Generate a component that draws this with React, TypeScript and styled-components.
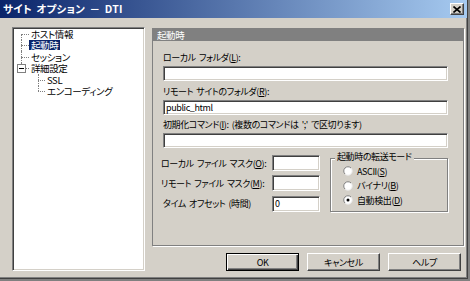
import styled, { createGlobalStyle } from "styled-components";

const GlobalStyle = createGlobalStyle`
  html, body {
    margin: 0;
    padding: 0;
    background: #808080;
  }
  body {
    font-family: "Noto Sans CJK JP", "DejaVu Sans", sans-serif;
    font-size: 9px;
    letter-spacing: -0.4px;
    word-spacing: 1.5px;
    font-feature-settings: "palt";
    color: #000;
  }
`;

const Window = styled.div`
  width: 468px;
  height: 279px;
  box-sizing: border-box;
  background: #d4d0c8;
  border-right: 1px solid #404040;
  border-bottom: 1px solid #404040;
  box-shadow: inset -1px -1px #808080;
  display: flex;
  flex-direction: column;
`;

const TitleBar = styled.div`
  height: 18px;
  display: flex;
  align-items: center;
  justify-content: space-between;
  padding: 0 3px 0 3px;
  background: linear-gradient(to right, #0a246a, #a6caf0);
`;

const Title = styled.span`
  color: #fff;
  font-weight: bold;
  font-size: 10.5px;
  line-height: 18px;
  letter-spacing: 0.2px;
  word-spacing: 2px;
`;

const CloseButton = styled.div`
  width: 14px;
  height: 12px;
  box-sizing: border-box;
  background: #d4d0c8;
  border: 1px solid;
  border-color: #fff #404040 #404040 #fff;
  box-shadow: inset -1px -1px #808080;
  display: flex;
  align-items: center;
  justify-content: center;
`;

const Body = styled.div`
  display: flex;
  gap: 7px;
  padding: 9px 0 0 12px;
`;

const Tree = styled.div`
  width: 133px;
  height: 244px;
  box-sizing: border-box;
  background: #fff;
  border: 1px solid;
  border-color: #808080 #fff #fff #808080;
  box-shadow: inset 1px 1px #404040, inset -1px -1px #d4d0c8;
  padding: 0 0 0 1px;
`;

const TreeRow = styled.div<{ $depth: number }>`
  height: 11.5px;
  display: flex;
  align-items: center;
  padding-left: ${(p) => (p.$depth === 0 ? 7 : 24)}px;
`;

const Connector = styled.span<{ $first?: boolean; $last?: boolean; $width: number }>`
  position: relative;
  flex: none;
  width: ${(p) => p.$width}px;
  align-self: stretch;
  &::before {
    content: "";
    position: absolute;
    left: 0;
    top: ${(p) => (p.$first ? "50%" : "0")};
    bottom: ${(p) => (p.$last ? "50%" : "0")};
    border-left: 1px dotted #808080;
  }
  &::after {
    content: "";
    position: absolute;
    left: 0;
    right: 0;
    top: 50%;
    border-top: 1px dotted #808080;
  }
`;

const ExpandBox = styled.span`
  position: absolute;
  z-index: 1;
  left: -4px;
  top: 50%;
  margin-top: -4px;
  width: 9px;
  height: 9px;
  box-sizing: border-box;
  background: #fff;
  border: 1px solid #808080;
  display: flex;
  align-items: center;
  justify-content: center;
  &::after {
    content: "";
    width: 5px;
    height: 1px;
    background: #000;
  }
`;

const TreeLabel = styled.span<{ $selected?: boolean }>`
  height: 10px;
  line-height: 10px;
  padding: 0 2px;
  white-space: nowrap;
  font-size: 9.5px;
  background: ${(p) => (p.$selected ? "#0a246a" : "transparent")};
  color: ${(p) => (p.$selected ? "#fff" : "#000")};
`;

const RightCol = styled.div`
  width: 312px;
  display: flex;
  flex-direction: column;
  padding-top: 1px;
`;

const Panel = styled.div`
  height: 218px;
  box-sizing: border-box;
  border: 1px solid #808080;
  box-shadow: 1px 1px 0 #fff;
  display: flex;
  flex-direction: column;
`;

const PanelHeader = styled.div`
  height: 12px;
  line-height: 12px;
  background: #808080;
  color: #fff;
  padding-left: 4px;
  font-size: 9.5px;
`;

const PanelBody = styled.div`
  padding: 11px 15px 0 10px;
  display: flex;
  flex-direction: column;
`;

const FieldLabel = styled.div`
  height: 12px;
  line-height: 12px;
  margin-bottom: 2px;
  white-space: nowrap;
`;

const TextBox = styled.div<{ $width?: number; $height?: number }>`
  width: ${(p) => (p.$width ? `${p.$width}px` : "100%")};
  height: ${(p) => p.$height ?? 15}px;
  box-sizing: border-box;
  background: #fff;
  border: 1px solid;
  border-color: #808080 #fff #fff #808080;
  box-shadow: inset 1px 1px #404040, inset -1px -1px #d4d0c8;
  padding: 0 2px;
  line-height: ${(p) => (p.$height ?? 15) - 2}px;
  flex: none;
`;

const Field = styled.div<{ $gap: number }>`
  display: flex;
  flex-direction: column;
  margin-bottom: ${(p) => p.$gap}px;
`;

const Lower = styled.div`
  display: flex;
  margin-top: 2px;
`;

const MaskGrid = styled.div`
  display: grid;
  grid-template-columns: 111px 48px;
  row-gap: 4px;
  margin-left: -2px;
  align-items: center;
`;

const MaskLabel = styled.span<{ $indent?: boolean }>`
  white-space: nowrap;
  padding-left: ${(p) => (p.$indent ? 2 : 0)}px;
`;

const GroupBox = styled.div`
  position: relative;
  width: 119px;
  height: 54px;
  box-sizing: border-box;
  margin: 3px 0 0 10px;
  border: 1px solid #808080;
  box-shadow: 1px 1px 0 #fff, inset 1px 1px 0 #fff;
  padding: 5px 0 0 12px;
  display: flex;
  flex-direction: column;
`;

const Legend = styled.span`
  position: absolute;
  left: 4px;
  top: -8px;
  padding: 0 2px;
  background: #d4d0c8;
  line-height: 12px;
  white-space: nowrap;
`;

const RadioRow = styled.div`
  height: 14.5px;
  display: flex;
  align-items: center;
  gap: 4px;
  white-space: nowrap;
`;

const ButtonRow = styled.div`
  display: flex;
  justify-content: flex-end;
  gap: 8px;
  margin-top: 7px;
  padding-right: 3px;
`;

const Button = styled.div<{ $default?: boolean }>`
  width: 73px;
  height: 18px;
  box-sizing: border-box;
  display: flex;
  align-items: center;
  justify-content: center;
  border: 1px solid;
  border-color: ${(p) => (p.$default ? "#000" : "#fff #404040 #404040 #fff")};
  box-shadow: ${(p) =>
    p.$default
      ? "inset 1px 1px #fff, inset -1px -1px #404040, inset -2px -2px #808080"
      : "inset -1px -1px #808080"};
`;

const Radio = ({ checked }: { checked?: boolean }) => (
  <svg width="10" height="10" viewBox="0 0 10 10">
    <circle cx="5" cy="5" r="4.2" fill="#fff" />
    <path d="M2 8 A4.2 4.2 0 0 1 8 2" stroke="#808080" fill="none" strokeWidth="1" />
    <path d="M8 2 A4.2 4.2 0 0 1 2 8" stroke="#e8e8e8" fill="none" strokeWidth="1" />
    {checked && <circle cx="5" cy="5" r="1.5" fill="#000" />}
  </svg>
);

const tree = [
  { label: "ホスト情報", depth: 0, first: true },
  { label: "起動時", depth: 0, selected: true },
  { label: "セッション", depth: 0 },
  { label: "詳細設定", depth: 0, last: true, expand: true },
  { label: "SSL", depth: 1 },
  { label: "エンコーディング", depth: 1, last: true },
];

export default function App() {
  return (
    <>
      <GlobalStyle />
      <Window>
        <TitleBar>
          <Title>サイト オプション － DTI</Title>
          <CloseButton>
            <svg width="8" height="7" viewBox="0 0 8 7">
              <path d="M0.5 0.5 L7.5 6.5 M7.5 0.5 L0.5 6.5" stroke="#000" strokeWidth="1.6" />
            </svg>
          </CloseButton>
        </TitleBar>
        <Body>
          <Tree>
            {tree.map((t) => (
              <TreeRow key={t.label} $depth={t.depth}>
                <Connector $first={t.first} $last={t.last} $width={t.depth === 0 ? 8 : 7}>
                  {t.expand && <ExpandBox />}
                </Connector>
                <TreeLabel $selected={t.selected}>{t.label}</TreeLabel>
              </TreeRow>
            ))}
          </Tree>
          <RightCol>
            <Panel>
              <PanelHeader>起動時</PanelHeader>
              <PanelBody>
                <Field $gap={5}>
                  <FieldLabel>ローカル フォルダ(<u>L</u>):</FieldLabel>
                  <TextBox />
                </Field>
                <Field $gap={4}>
                  <FieldLabel>リモート サイトのフォルダ(<u>R</u>):</FieldLabel>
                  <TextBox>public_html</TextBox>
                </Field>
                <Field $gap={5}>
                  <FieldLabel>初期化コマンド(<u>I</u>): (複数のコマンドは ';' で区切ります)</FieldLabel>
                  <TextBox />
                </Field>
                <Lower>
                  <MaskGrid>
                    <MaskLabel>ローカル ファイル マスク(<u>O</u>):</MaskLabel>
                    <TextBox $width={48} $height={16} />
                    <MaskLabel>リモート ファイル マスク(<u>M</u>):</MaskLabel>
                    <TextBox $width={48} $height={16} />
                    <MaskLabel $indent>タイム オフセット (時間)</MaskLabel>
                    <TextBox $width={48} $height={16}>0</TextBox>
                  </MaskGrid>
                  <GroupBox>
                    <Legend>起動時の転送モード</Legend>
                    <RadioRow>
                      <Radio />
                      <span>ASCII(<u>S</u>)</span>
                    </RadioRow>
                    <RadioRow>
                      <Radio />
                      <span>バイナリ(<u>B</u>)</span>
                    </RadioRow>
                    <RadioRow>
                      <Radio checked />
                      <span>自動検出(<u>D</u>)</span>
                    </RadioRow>
                  </GroupBox>
                </Lower>
              </PanelBody>
            </Panel>
            <ButtonRow>
              <Button $default>OK</Button>
              <Button>キャンセル</Button>
              <Button>ヘルプ</Button>
            </ButtonRow>
          </RightCol>
        </Body>
      </Window>
    </>
  );
}
